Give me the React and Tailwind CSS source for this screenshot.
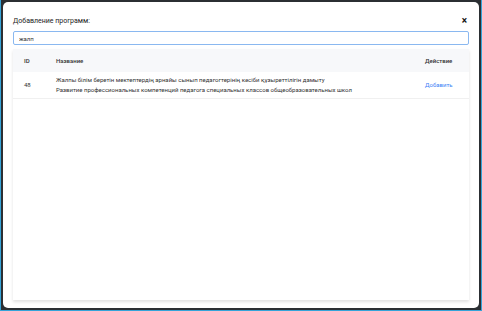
import React from 'react';

const rows = [
  {
    id: 48,
    kz: 'Жалпы білім беретін мектептердің арнайы сынып педагогтерінің кәсіби құзыреттілігін дамыту',
    ru: 'Развитие профессиональных компетенций педагога специальных классов общеобразовательных школ',
  },
];

export default function App() {
  return (
    <div className="h-[311px] w-[482px] bg-[#35a3d8] font-['Roboto',sans-serif]">
      <div className="h-[310px] mx-[1px] bg-[#2b2f33] p-[2px] pl-[2px]">
        <div className="h-full rounded-[5px] bg-white px-[10px] pt-[12px] flex flex-col">
          <div className="flex items-center justify-between h-[14px]">
            <h2 className="text-[7px] text-[#222]">Добавление программ:</h2>
            <button className="text-[10px] font-bold leading-none text-[#111] mr-[2px]">×</button>
          </div>
          <input
            defaultValue="жалп"
            className="mt-[3px] h-[14px] w-full rounded-[2px] border border-[#8ab8f0] px-[5px] text-[6px] text-[#333] outline-none"
          />
          <div className="mt-[4px] mb-[8px] flex-1 bg-white shadow-[0_2px_3px_rgba(0,0,0,0.12)]">
            <table className="w-full text-[6px] text-[#333]">
              <thead>
                <tr className="bg-[#f7f8fa] h-[23px]">
                  <th className="w-[43px] pl-[11px] text-left font-medium">ID</th>
                  <th className="text-left font-medium">Название</th>
                  <th className="w-[44px] text-left font-medium">Действие</th>
                </tr>
              </thead>
              <tbody>
                {rows.map((r) => (
                  <tr key={r.id} className="h-[26px] border-b border-[#f0f0f0]">
                    <td className="pl-[11px]">{r.id}</td>
                    <td className="leading-[9.5px]">
                      <div>{r.kz}</div>
                      <div>{r.ru}</div>
                    </td>
                    <td className="text-[#3b82f6]">Добавить</td>
                  </tr>
                ))}
              </tbody>
            </table>
          </div>
        </div>
      </div>
    </div>
  );
}
